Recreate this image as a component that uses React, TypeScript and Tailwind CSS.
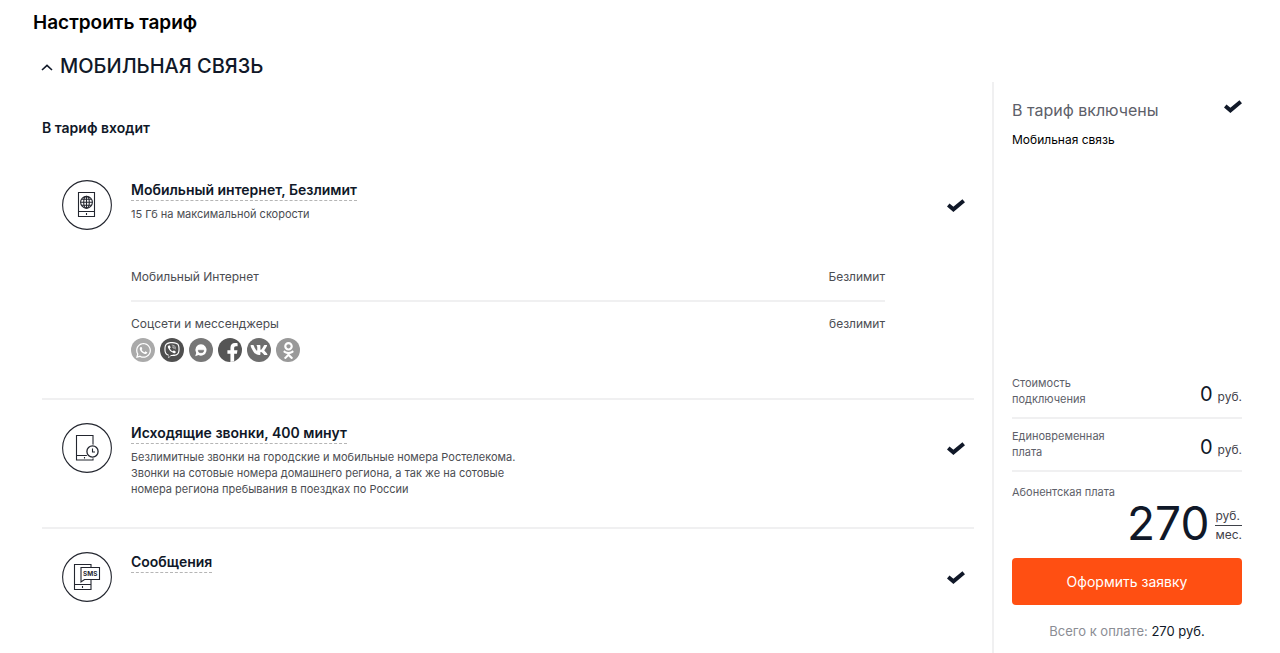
import type { ReactNode } from "react";
import { FaFacebookF, FaOdnoklassniki, FaViber, FaVk, FaWhatsapp } from "react-icons/fa";

function CheckMark() {
  return (
    <svg className="h-[13px] w-[18px] shrink-0" viewBox="0 0 18 13" fill="none" aria-hidden="true">
      <path d="M1.2 6 6.4 10.3 16.7 1.7" stroke="#101828" strokeWidth="4" />
    </svg>
  );
}

function RoundIcon({ children }: { children: ReactNode }) {
  return (
    <svg className="size-[50px] shrink-0" viewBox="0 0 50 50" fill="none" stroke="#23262f" strokeWidth="1.1" aria-hidden="true">
      <circle cx="25" cy="25" r="24.4" />
      {children}
    </svg>
  );
}

function InternetIcon() {
  return (
    <RoundIcon>
      <path d="M16.5 12.5h16v24h-16zM16.5 31.5h16M24.5 33v2" />
      <circle cx="24.5" cy="22.3" r="5.9" />
      <ellipse cx="24.5" cy="22.3" rx="2.8" ry="5.9" />
      <path d="M24.5 16.5v11.6M18.6 22.3h11.8M19.8 19.3h9.4M19.8 25.3h9.4" />
    </RoundIcon>
  );
}

function CallsIcon() {
  return (
    <RoundIcon>
      <path d="M14.5 12.5H31V37H14.5zM14.5 32.5H31M22.5 34v1.5" />
      <circle cx="30.5" cy="28.5" r="7" fill="#fff" stroke="none" />
      <circle cx="30.5" cy="28.5" r="5.6" strokeWidth="1.3" />
      <path d="M30.5 25.5v3.5h2.5" />
    </RoundIcon>
  );
}

function SmsIcon() {
  return (
    <RoundIcon>
      <path d="M29 15V12.5H12.5v25H29V28M12.5 32.5H29M20.5 34v2" />
      <path d="M19 30V15.5h18.5v12H22.5z" fill="#fff" />
      <text x="21" y="23.8" fontSize="6.4" fontWeight="700" fill="#23262f" stroke="none" fontFamily="Inter, sans-serif">SMS</text>
    </RoundIcon>
  );
}

function TamTamIcon() {
  return (
    <svg viewBox="0 0 16 16" className="size-4" aria-hidden="true">
      <path d="M8 2.2a5.7 5.7 0 1 1-2.5 10.9L2.2 14.3l1-3.4A5.7 5.7 0 0 1 8 2.2Z" fill="#fff" />
      <path d="M5.2 8.2h5.6a2.8 2.6 0 0 1-5.6 0Z" fill="#777" stroke="#777" strokeWidth=".5" strokeLinejoin="round" />
    </svg>
  );
}

const bubble = "flex size-6 justify-center rounded-full text-white";

function Messengers() {
  return (
    <ul className="mt-[2px] flex gap-[5px]">
      <li className={`${bubble} items-center bg-[#aaaaaa]`}><FaWhatsapp size={17} title="WhatsApp" /></li>
      <li className={`${bubble} items-center bg-[#4f4f4f]`}><FaViber size={16} title="Viber" /></li>
      <li className={`${bubble} items-center bg-[#777777]`}><TamTamIcon /></li>
      <li className={`${bubble} items-end overflow-hidden bg-[#555555] pl-1`}><FaFacebookF size={19} title="Facebook" /></li>
      <li className={`${bubble} items-center bg-[#6d6d6d]`}><FaVk size={18} title="VK" /></li>
      <li className={`${bubble} items-center bg-[#999999]`}><FaOdnoklassniki size={17} title="OK" /></li>
    </ul>
  );
}

interface ServiceProps {
  icon: ReactNode;
  title: string;
  text?: string;
  children?: ReactNode;
}

function Service({ icon, title, text, children }: ServiceProps) {
  return (
    <li className="flex border-t-2 border-[#f0f0f1] pt-[23px] pb-[30px] pl-5 first:border-transparent first:pb-9">
      {icon}
      <div className="ml-[19px] min-w-0 flex-1">
        <h4 className="text-[0px]">
          <button type="button" className="border-b border-dashed border-[#b5b5b5] text-left text-sm leading-5 font-semibold text-[#101828]">
            {title}
          </button>
        </h4>
        {text && <p className="mt-[5px] max-w-[390px] text-[11px] leading-4 text-[#4b4d52]">{text}</p>}
        {children}
      </div>
      <div className="flex w-[89px] shrink-0 justify-end pt-[19px] pr-[9px]">
        <CheckMark />
      </div>
    </li>
  );
}

function OneTimeCost({ label }: { label: string }) {
  return (
    <div className="mb-[9px] flex items-end justify-between border-b-2 border-[#f0f0f1] pb-[10px]">
      <dt className="w-24 text-[11px] leading-4 text-[#5d6069]">{label}</dt>
      <dd className="flex items-baseline gap-[5px] text-xs leading-5 text-[#3f424a]">
        <span className="text-xl leading-5 text-[#101828]">0</span> руб.
      </dd>
    </div>
  );
}

export default function App() {
  return (
    <div className="flex min-h-screen flex-col bg-white font-['Inter','Liberation_Sans',sans-serif] text-[#101828]">
      <header className="pt-[9px] pl-[33px]">
        <h1 className="text-[19px] leading-7 font-semibold text-black">Настроить тариф</h1>
        <h2 className="mt-[15px] ml-2 text-xl leading-7 font-medium">
          <button type="button" className="flex items-center gap-[7px]">
            <svg className="mt-[3px] h-[7px] w-3" viewBox="0 0 12 7" fill="none" stroke="#101828" strokeWidth="1.6" aria-hidden="true">
              <path d="M1 6 6 1.4 11 6" />
            </svg>
            МОБИЛЬНАЯ СВЯЗЬ
          </button>
        </h2>
      </header>
      <div className="mt-[2px] flex flex-1">
        <main className="min-w-0 flex-1 pt-9 pr-[18px] pl-[42px]">
          <h3 className="text-sm leading-5 font-semibold">В тариф входит</h3>
          <ul className="mt-[17px]">
            <Service icon={<InternetIcon />} title="Мобильный интернет, Безлимит" text="15 Гб на максимальной скорости">
              <dl className="mt-[38px] text-xs leading-6 text-[#4b4d52]">
                <div className="flex justify-between border-b-2 border-[#f0f0f1] pt-[5px] pb-[11px]">
                  <dt>Мобильный Интернет</dt>
                  <dd>Безлимит</dd>
                </div>
                <div className="flex justify-between pt-[10px]">
                  <dt>
                    Соцсети и мессенджеры
                    <Messengers />
                  </dt>
                  <dd>безлимит</dd>
                </div>
              </dl>
            </Service>
            <Service
              icon={<CallsIcon />}
              title="Исходящие звонки, 400 минут"
              text="Безлимитные звонки на городские и мобильные номера Ростелекома. Звонки на сотовые номера домашнего региона, а так же на сотовые номера региона пребывания в поездках по России"
            />
            <Service icon={<SmsIcon />} title="Сообщения" />
          </ul>
        </main>
        <aside className="flex w-[288px] shrink-0 flex-col border-l-2 border-[#f0f0f1] pt-4 pr-[38px] pb-3 pl-[18px]">
          <div className="flex items-start justify-between">
            <h3 className="text-base leading-6 text-[#5d6069]">В тариф включены</h3>
            <div className="pt-[2px]">
              <CheckMark />
            </div>
          </div>
          <p className="mt-[10px] text-xs leading-4 text-black">Мобильная связь</p>
          <dl className="mt-auto">
            <OneTimeCost label="Стоимость подключения" />
            <OneTimeCost label="Единовременная плата" />
            <div className="pt-[3px]">
              <dt className="text-[11px] leading-4 text-[#5d6069]">Абонентская плата</dt>
              <dd className="flex items-end justify-end gap-[6px]">
                <span className="text-[46px] leading-[46px]">270</span>
                <span className="flex flex-col pb-[2px] text-xs leading-[18px] text-[#3f424a]">
                  <span className="border-b border-[#3f424a]">руб.</span>
                  <span>мес.</span>
                </span>
              </dd>
            </div>
          </dl>
          <button type="button" className="mt-3 h-[47px] rounded bg-[#ff4f12] text-sm text-white">
            Оформить заявку
          </button>
          <p className="mt-4 text-center text-[13px] leading-5 text-[#8b8d94]">
            Всего к оплате: <span className="text-[#101828]">270 руб.</span>
          </p>
        </aside>
      </div>
    </div>
  );
}
